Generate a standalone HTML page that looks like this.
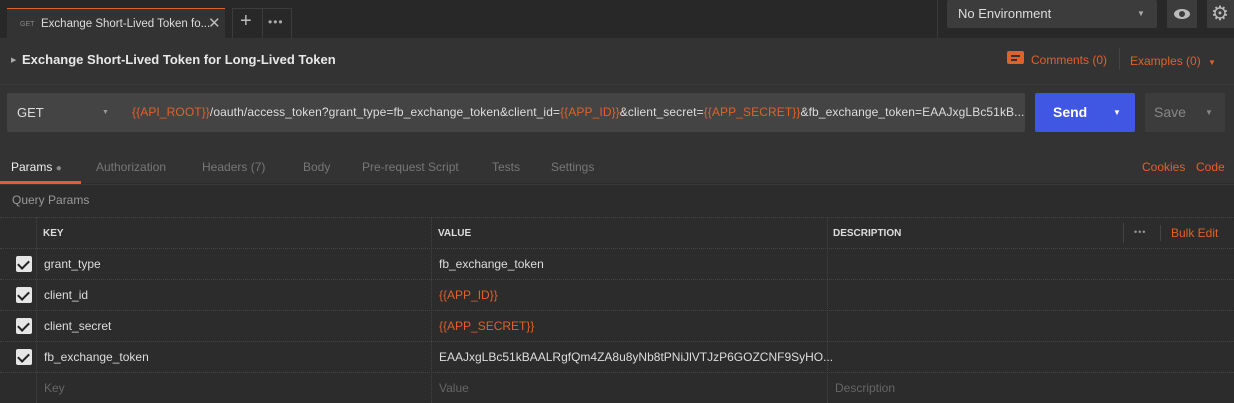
<!DOCTYPE html>
<html><head><style>
*{box-sizing:border-box;margin:0;padding:0}
body{width:1234px;height:403px;overflow:hidden;background:#2c2c2c;font-family:"Liberation Sans",sans-serif;font-size:12px;color:#ccc;position:relative}
.a{position:absolute;white-space:nowrap}
.o{color:#e0612a}
.hl{position:absolute;left:0;width:1234px;height:1px}
.v{position:absolute;width:1px;border-left:1px dotted #444}
.cb{position:absolute;left:16px;width:16px;height:16px;background:#e6e6e6;border-radius:2px}
.cb:after{content:"";position:absolute;left:4px;top:2px;width:5px;height:9px;border:solid #222;border-width:0 2px 2px 0;transform:rotate(45deg)}
.rl{position:absolute;left:0;width:1234px;border-top:1px dotted #444}
</style></head><body>
<div class="a" style="left:0;top:0;width:1234px;height:38px;background:#282828"></div>
<div class="a" style="left:7px;top:8px;width:218px;height:30px;background:#333;border-top:1.5px solid #e0612a"></div>
<div class="a" style="left:20px;top:21px;font-size:7px;color:#888">GET</div>
<div class="a" style="left:41px;top:18px;font-size:11.5px;color:#ddd">Exchange Short-Lived Token fo...</div>
<div class="a" style="left:208px;top:14px;font-size:15px;color:#bbb">✕</div>
<div class="a" style="left:232px;top:8px;width:60px;height:30px;border:1px solid #3c3c3c;border-bottom:none"></div>
<div class="a" style="left:262px;top:8px;width:1px;height:30px;background:#3c3c3c"></div>
<div class="a" style="left:240px;top:10px;font-size:20px;color:#bbb">+</div>
<div class="a" style="left:268px;top:15px;font-size:12px;color:#aaa;letter-spacing:1px">•••</div>
<div class="a" style="left:937px;top:0;width:1px;height:38px;background:#3a3a3a"></div>
<div class="a" style="left:947px;top:0;width:210px;height:28px;background:#3c3c3c;border-radius:2px"></div>
<div class="a" style="left:958px;top:6px;font-size:13px;color:#ddd">No Environment</div>
<div class="a" style="left:1137px;top:9px;font-size:8px;color:#aaa">▼</div>
<div class="a" style="left:1167px;top:0;width:30px;height:28px;background:#3c3c3c"></div>
<svg class="a" style="left:1173px;top:7px" width="18" height="14"><ellipse cx="9" cy="7" rx="8" ry="5" fill="#bbb"/><circle cx="9" cy="7" r="3" fill="#3c3c3c"/></svg>
<div class="a" style="left:1207px;top:0;width:27px;height:28px;background:#3c3c3c"></div>
<div class="a" style="left:1211px;top:1px;font-size:20px;color:#bbb">⚙</div>
<div class="a" style="left:0;top:38px;width:1234px;height:46px;background:#333"></div>
<div class="a" style="left:11px;top:56px;font-size:7px;color:#aaa">▶</div>
<div class="a" style="left:22px;top:52px;font-size:13px;font-weight:bold;color:#e8e8e8">Exchange Short-Lived Token for Long-Lived Token</div>
<div class="a" style="left:1007px;top:51px;width:17px;height:13px;background:#e0612a;border-radius:2px"></div>
<div class="a" style="left:1011px;top:55px;width:9px;height:2px;background:#333"></div>
<div class="a" style="left:1011px;top:59px;width:6px;height:2px;background:#333"></div>
<div class="a o" style="left:1031px;top:53px">Comments (0)</div>
<div class="a" style="left:1119px;top:48px;width:1px;height:22px;background:#444"></div>
<div class="a o" style="left:1130px;top:54px">Examples (0) <span style="font-size:8px;margin-left:4px">▼</span></div>
<div class="hl" style="top:84px;background:#3a3a3a"></div>
<div class="a" style="left:0;top:85px;width:1234px;height:98px;background:#333"></div>
<div class="a" style="left:7px;top:93px;width:1018px;height:39px;background:#444;border-radius:2px"></div>
<div class="a" style="left:17px;top:105px;font-size:13px;color:#ddd">GET</div>
<div class="a" style="left:102px;top:109px;font-size:7px;color:#999">▼</div>
<div class="a" style="left:132px;top:105px;color:#ddd;letter-spacing:0.1px"><span class="o">{{API_ROOT}}</span>/oauth/access_token?grant_type=fb_exchange_token&amp;client_id=<span class="o">{{APP_ID}}</span>&amp;client_secret=<span class="o">{{APP_SECRET}}</span>&amp;fb_exchange_token=EAAJxgLBc51kB...</div>
<div class="a" style="left:1035px;top:93px;width:100px;height:39px;background:#4057e4;border-radius:2px"></div>
<div class="a" style="left:1053px;top:104px;font-size:14px;font-weight:bold;color:#fff">Send</div>
<div class="a" style="left:1113px;top:108px;font-size:8px;color:#fff">▼</div>
<div class="a" style="left:1145px;top:93px;width:80px;height:39px;background:#3c3c3c;border-radius:2px"></div>
<div class="a" style="left:1154px;top:104px;font-size:14px;color:#888">Save</div>
<div class="a" style="left:1205px;top:108px;font-size:8px;color:#888">▼</div>
<div class="a" style="left:11px;top:160px;color:#eee">Params <span style="color:#888;font-size:10px">●</span></div>
<div class="a" style="left:96px;top:160px;color:#777">Authorization</div>
<div class="a" style="left:202px;top:160px;color:#777">Headers (7)</div>
<div class="a" style="left:303px;top:160px;color:#777">Body</div>
<div class="a" style="left:362px;top:160px;color:#777">Pre-request Script</div>
<div class="a" style="left:492px;top:160px;color:#777">Tests</div>
<div class="a" style="left:551px;top:160px;color:#777">Settings</div>
<div class="a o" style="left:1142px;top:160px">Cookies</div>
<div class="a o" style="left:1196px;top:160px">Code</div>
<div class="a" style="left:0;top:181px;width:81px;height:3px;background:#e0612a"></div>
<div class="hl" style="top:184px;background:#3a3a3a"></div>
<div class="a" style="left:12px;top:193px;color:#999">Query Params</div>
<div class="rl" style="top:217px"></div>
<div class="rl" style="top:248px"></div>
<div class="rl" style="top:279px"></div>
<div class="rl" style="top:310px"></div>
<div class="rl" style="top:341px"></div>
<div class="rl" style="top:372px"></div>
<div class="v" style="left:36px;top:217px;height:186px"></div>
<div class="v" style="left:431px;top:217px;height:186px"></div>
<div class="v" style="left:827px;top:217px;height:186px"></div>
<div class="a" style="left:43px;top:228px;font-size:10px;font-weight:bold;color:#ddd">KEY</div>
<div class="a" style="left:438px;top:228px;font-size:10px;font-weight:bold;color:#ddd">VALUE</div>
<div class="a" style="left:833px;top:228px;font-size:10px;font-weight:bold;color:#ddd">DESCRIPTION</div>
<div class="a" style="left:1123px;top:223px;width:1px;height:20px;background:#444"></div>
<div class="a" style="left:1134px;top:227px;font-size:9px;color:#999;letter-spacing:1px">•••</div>
<div class="a" style="left:1160px;top:225px;width:1px;height:16px;background:#444"></div>
<div class="a o" style="left:1171px;top:226px">Bulk Edit</div>
<div class="cb" style="top:256px"></div><div class="a" style="left:44px;top:257px;color:#ddd">grant_type</div><div class="a" style="left:439px;top:257px;color:#ddd">fb_exchange_token</div>
<div class="cb" style="top:287px"></div><div class="a" style="left:44px;top:288px;color:#ddd">client_id</div><div class="a o" style="left:439px;top:288px">{{APP_ID}}</div>
<div class="cb" style="top:318px"></div><div class="a" style="left:44px;top:319px;color:#ddd">client_secret</div><div class="a o" style="left:439px;top:319px">{{APP_SECRET}}</div>
<div class="cb" style="top:349px"></div><div class="a" style="left:44px;top:350px;color:#ddd">fb_exchange_token</div><div class="a" style="left:439px;top:350px;color:#ddd">EAAJxgLBc51kBAALRgfQm4ZA8u8yNb8tPNiJlVTJzP6GOZCNF9SyHO...</div>
<div class="a" style="left:44px;top:381px;color:#666">Key</div><div class="a" style="left:439px;top:381px;color:#666">Value</div><div class="a" style="left:835px;top:381px;color:#666">Description</div>
</body></html>
